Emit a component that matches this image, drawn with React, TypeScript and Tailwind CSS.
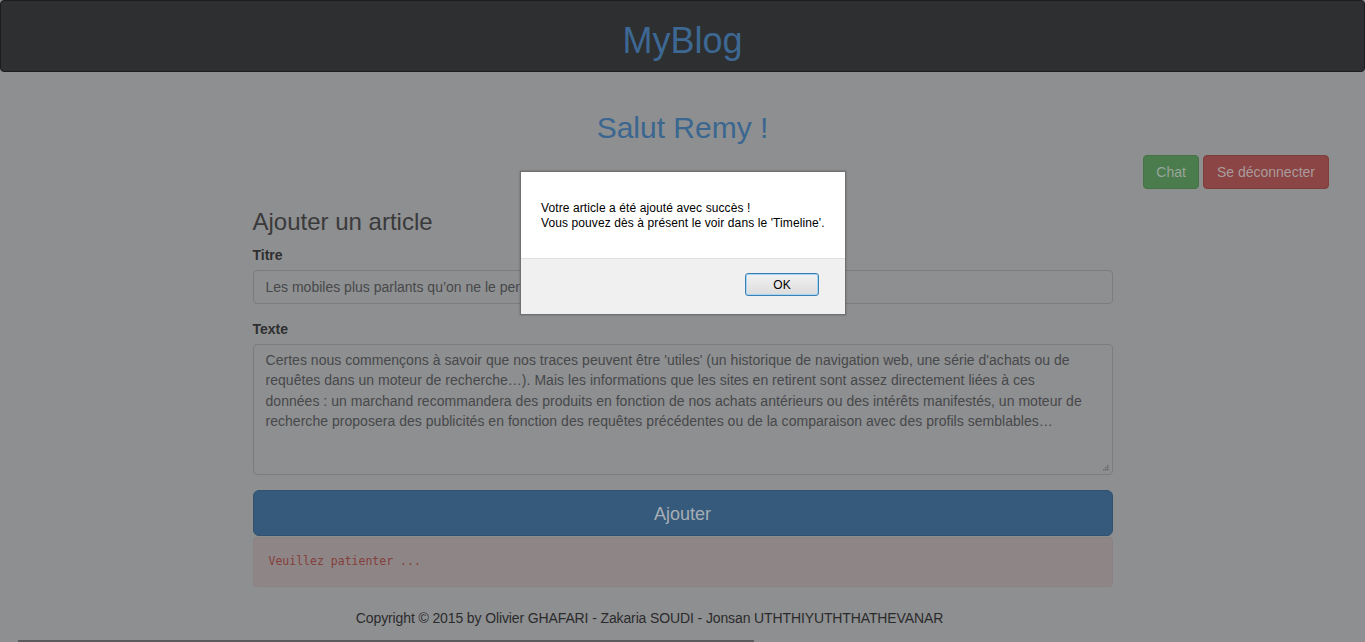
import React from "react";

export default function App() {
  const text =
    "Certes nous commençons à savoir que nos traces peuvent être 'utiles' (un historique de navigation web, une série d'achats ou de requêtes dans un moteur de recherche…). Mais les informations que les sites en retirent sont assez directement liées à ces données\u00a0: un marchand recommandera des produits en fonction de nos achats antérieurs ou des intérêts manifestés, un moteur de recherche proposera des publicités en fonction des requêtes précédentes ou de la comparaison avec des profils semblables…";
  return (
    <div
      className="relative h-[642px] w-[1365px] overflow-hidden bg-[#8e8f91]"
      style={{ fontFamily: '"Liberation Sans", Arial, sans-serif' }}
    >
      <header className="flex h-[72px] items-center justify-center rounded-[4px] border border-[#1c1d1f] bg-[#2e2f31]">
        <span className="mt-[10px] text-[36px] leading-none text-[#3c6893]">MyBlog</span>
      </header>

      <h1 className="mt-[39px] text-center text-[30px] leading-[33px] text-[#3a6690]">Salut Remy !</h1>

      <div className="mt-[11px] flex justify-end gap-[4px] pr-[36px]">
        <button className="h-[34px] rounded-[4px] border border-[#467346] bg-[#4b7c4d] px-[12px] text-[14px] text-[#9aa59c]">
          Chat
        </button>
        <button className="h-[34px] rounded-[4px] border border-[#7f3e3e] bg-[#8b4545] px-[13px] text-[14px] text-[#a99c9c]">
          Se déconnecter
        </button>
      </div>

      <div className="mx-auto mt-[19px] w-[860px]">
        <h2 className="text-[24px] leading-[28px] text-[#3a3a3b]">Ajouter un article</h2>
        <label className="mt-[9px] block text-[14px] font-bold leading-[20px] text-[#2f2f30]">Titre</label>
        <div className="mt-[5px] flex h-[34px] items-center rounded-[4px] border border-[#7b7c7e] px-[12px] text-[14px] text-[#47484a]">
          Les mobiles plus parlants qu’on ne le pensait
        </div>
        <label className="mt-[15px] block text-[14px] font-bold leading-[20px] text-[#2f2f30]">Texte</label>
        <div className="relative mt-[5px] h-[131px] rounded-[4px] border border-[#7b7c7e] py-[5px] pl-[12px] pr-[14px] text-[14px] leading-[20.3px] tracking-[0.03px] text-[#47484a]">
          {text}
          <svg className="absolute bottom-[2px] right-[2px]" width="9" height="9" viewBox="0 0 9 9">
            <rect x="6" y="2" width="1.5" height="1.5" fill="#6b6c6e" />
            <rect x="4" y="4" width="1.5" height="1.5" fill="#6b6c6e" />
            <rect x="6" y="4" width="1.5" height="1.5" fill="#6b6c6e" />
            <rect x="2" y="6" width="1.5" height="1.5" fill="#6b6c6e" />
            <rect x="4" y="6" width="1.5" height="1.5" fill="#6b6c6e" />
            <rect x="6" y="6" width="1.5" height="1.5" fill="#6b6c6e" />
          </svg>
        </div>
        <button className="mt-[15px] flex h-[46px] w-full items-center justify-center rounded-[6px] border border-[#30516f] bg-[#365a7b] pt-[2px] text-[18px] text-[#a6adb5]">
          Ajouter
        </button>
        <div
          className="mt-[1px] flex h-[50px] items-center rounded-[4px] border border-[#8a8182] bg-[#8e8586] px-[15px] text-[11.5px] text-[#853f3c]"
          style={{ fontFamily: '"DejaVu Sans Mono", "Liberation Mono", monospace' }}
        >
          Veuillez patienter ...
        </div>
      </div>

      <p className="mt-[21px] pr-[66px] text-center text-[14px] leading-[20px] tracking-[-0.12px] text-[#2b2b2c]">
        Copyright © 2015 by Olivier GHAFARI - Zakaria SOUDI - Jonsan UTHTHIYUTHTHATHEVANAR
      </p>

      <div className="absolute bottom-0 left-[18px] h-[2px] w-[736px] bg-[#5a5b5d]" />

      <div className="absolute left-[520px] top-[171px] w-[326px] border border-[#707070] bg-white shadow-[0_0_2px_rgba(0,0,0,0.3)]">
        <div className="h-[86px] px-[20px] pt-[29px] text-[12px] leading-[15px] tracking-[0.1px] text-black">
          <div>Votre article a été ajouté avec succès !</div>
          <div>Vous pouvez dès à présent le voir dans le 'Timeline'.</div>
        </div>
        <div className="flex h-[56px] items-start justify-end border-t border-[#dfdfdf] bg-[#f0f0f0] pr-[26px] pt-[14px]">
          <button className="h-[23px] w-[74px] rounded-[3px] border border-[#3c7fb1] bg-gradient-to-b from-[#f2f2f2] to-[#dcdcdc] text-[12px] text-black shadow-[inset_0_0_0_1px_#a6d6f5]">
            OK
          </button>
        </div>
      </div>
    </div>
  );
}
